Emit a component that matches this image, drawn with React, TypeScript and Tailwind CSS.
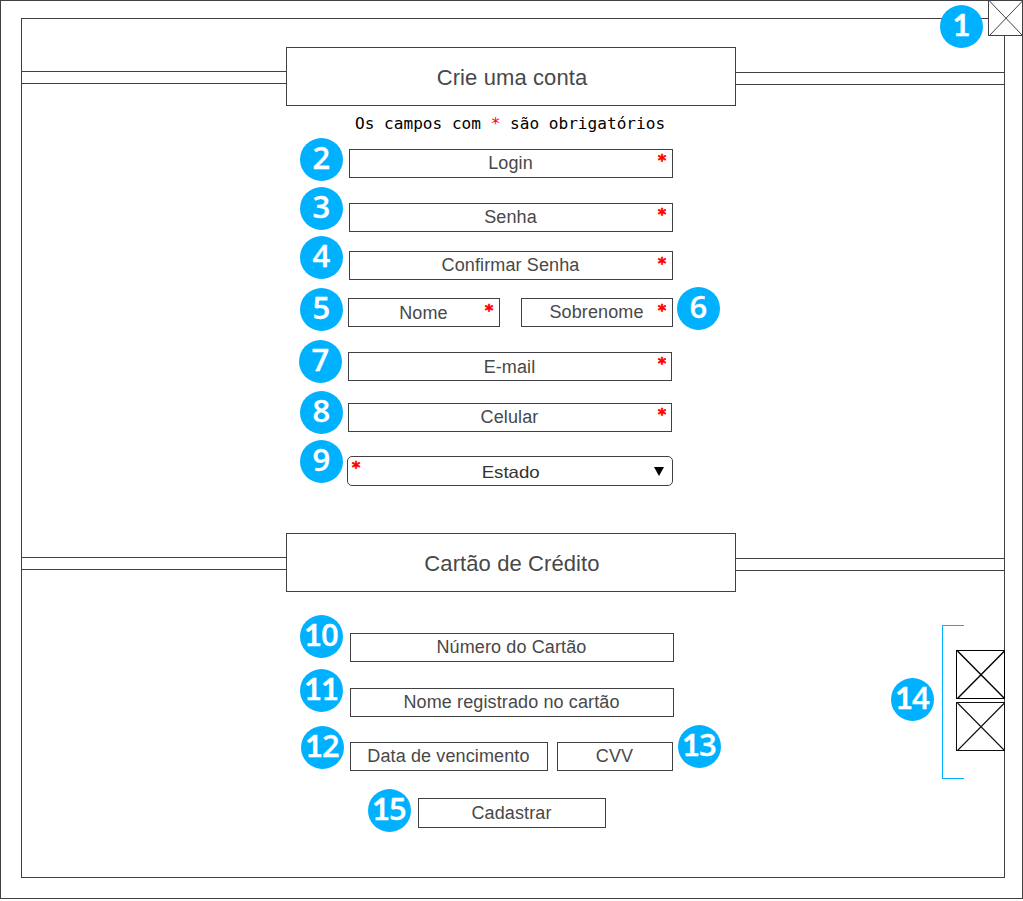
import { clsx } from "clsx";

function Badge({ n, className }: { n: number; className: string }) {
  return (
    <span
      className={clsx(
        "absolute z-10 flex size-[43px] justify-center rounded-full bg-[#00b1ff] pr-[1px] font-['Open_Sans',sans-serif] text-[31px] leading-[38px] font-semibold text-white [-webkit-text-stroke:0.3px_#fff]",
        className,
      )}
    >
      {String(n)
        .split("")
        .map((digit, i) => (
          <span
            key={i}
            className={digit === "1" ? "w-[17px] text-center font-['Lato',sans-serif] text-[31px] font-bold" : "w-[17px] text-center"}
          >
            {digit}
          </span>
        ))}
    </span>
  );
}

function Required({ className }: { className: string }) {
  return (
    <span
      className={clsx(
        "absolute flex h-5 w-3 justify-center font-['DejaVu_Sans_Mono',monospace] text-[16px] leading-5 font-bold text-[#ff0000] [-webkit-text-stroke:0.6px_#ff0000]",
        className,
      )}
    >
      *
    </span>
  );
}

type FieldProps = {
  label: string;
  n: number;
  box: string;
  badge: string;
  star?: string;
  text?: string;
};

function Field({ label, n, box, badge, star, text = "pt-[3px]" }: FieldProps) {
  return (
    <div className={clsx("relative shrink-0", box)}>
      <div
        className={clsx(
          "h-full w-full border border-[#414042] pr-[1px] text-center text-[18px] leading-[20px] tracking-[0.12px] whitespace-nowrap text-[#484848]",
          text,
        )}
      >
        {label}
      </div>
      {star && <Required className={star} />}
      <Badge n={n} className={badge} />
    </div>
  );
}

function SectionTitle({ children, className }: { children: string; className: string }) {
  return (
    <div className={clsx("flex h-[59px] shrink-0", className)}>
      <div className="mt-[24px] h-[13px] w-[264px] border-y border-[#414042]" />
      <h2 className="w-[450px] border border-[#414042] pt-[17px] pl-[2px] text-center text-[22px] leading-[26px] tracking-[0.1px] text-[#484848]">
        {children}
      </h2>
      <div className="mt-[25px] h-[13px] w-[268px] border-y border-[#414042]" />
    </div>
  );
}

function Crossed({ w, h, color, weight = 1 }: { w: number; h: number; color: string; weight?: number }) {
  return (
    <svg width={w} height={h} viewBox={`0 0 ${w} ${h}`} className="block" fill="none" stroke={color}>
      <rect x="0.5" y="0.5" width={w - 1} height={h - 1} fill="#fff" />
      <path d={`M1.5 1L${w - 0.5} ${h - 0.5}M${w - 0.5} 1L1.5 ${h - 0.5}`} strokeWidth={weight} />
    </svg>
  );
}

export default function App() {
  return (
    <div className="h-[901px] w-[1023px] overflow-hidden bg-white font-['Liberation_Sans',Arial,sans-serif]">
      <div className="relative h-[899px] border border-[#414042] pt-[17px] pl-[20px]">
        <main className="flex h-[860px] w-[984px] flex-col border border-[#414042]">
          <SectionTitle className="mt-[28px]">Crie uma conta</SectionTitle>
          <p className="ml-[333px] h-[43px] shrink-0 pt-[8px] font-['DejaVu_Sans_Mono',monospace] text-[16.1px] leading-[20px] whitespace-pre text-black">
            Os campos com <span className="text-[#ff0000]">*</span> são obrigatórios
          </p>

          <form className="ml-[325px] flex w-[327px] flex-col">
            <Field label="Login" n={2} box="ml-[2px] h-[29px] w-[324px]" badge="-left-[49px] -top-[11px]" star="left-[307px] top-[2px]" />
            <Field label="Senha" n={3} box="mt-[25px] ml-[2px] h-[29px] w-[324px]" badge="-left-[49px] -top-[16px]" star="left-[307px] top-[2px]" />
            <Field label="Confirmar Senha" n={4} box="mt-[19px] ml-[2px] h-[29px] w-[324px]" badge="-left-[49px] -top-[15px]" star="left-[307px] top-[3px]" />
            <div className="mt-[18px] ml-[1px] flex gap-[21px]">
              <Field label="Nome" n={5} box="h-[29px] w-[152px]" badge="-left-[48px] -top-[10px]" star="left-[135px] top-[3px]" text="pt-[4px]" />
              <Field label="Sobrenome" n={6} box="h-[29px] w-[152px]" badge="left-[156px] -top-[11px]" star="left-[135px] top-[3px]" />
            </div>
            <Field label="E-mail" n={7} box="mt-[25px] ml-[1px] h-[29px] w-[324px]" badge="-left-[49px] -top-[12px]" star="left-[308px] top-[2px]" text="pt-[4px]" />
            <Field label="Celular" n={8} box="mt-[22px] ml-[1px] h-[29px] w-[324px]" badge="-left-[48px] -top-[12px]" star="left-[308px] top-[2px]" />
            <div className="relative mt-[24px] h-[30px] w-[326px] shrink-0">
              <div className="h-full rounded-[5px] border border-[#414042] pt-[5px] pl-[2px] text-center text-[16.5px] leading-[20px] text-[#333333]">
                <span className="inline-block scale-x-[1.13]">Estado</span>
              </div>
              <svg width="10" height="9" viewBox="0 0 10 9" className="absolute top-[11px] left-[307px]">
                <path d="M0 0H10L5 9Z" fill="#000" />
              </svg>
              <Required className="left-[3px] top-[2px]" />
              <Badge n={9} className="-left-[47px] -top-[16px]" />
            </div>
          </form>

          <SectionTitle className="mt-[47px]">Cartão de Crédito</SectionTitle>

          <form className="ml-[328px] flex w-[324px] flex-col pt-[41px]">
            <Field label="Número do Cartão" n={10} box="h-[29px] w-[324px]" badge="-left-[50px] -top-[18px]" />
            <Field label="Nome registrado no cartão" n={11} box="mt-[26px] h-[29px] w-[324px]" badge="-left-[50px] -top-[19px]" />
            <div className="mt-[25px] flex gap-[9px]">
              <Field label="Data de vencimento" n={12} box="h-[29px] w-[198px]" badge="-left-[49px] -top-[16px]" />
              <Field label="CVV" n={13} box="h-[29px] w-[116px]" badge="left-[121px] -top-[17px]" />
            </div>
            <Field label="Cadastrar" n={15} box="mt-[27px] ml-[68px] h-[30px] w-[188px]" badge="-left-[50px] -top-[9px]" text="pt-[4px]" />
          </form>
        </main>

        <div className="absolute -top-px -right-px">
          <Crossed w={35} h={36} color="#414042" />
          <Badge n={1} className="-left-[48px] top-[5px]" />
        </div>

        <aside className="absolute top-[624px] left-[941px] flex h-[154px] w-[63px]">
          <div className="h-full w-[22px] border-y border-l border-[#00b1ff]" />
          <div className="-ml-[8px] flex flex-col gap-[3px] pt-[25px]">
            <Crossed w={49} h={49} color="#000" weight={1.4} />
            <Crossed w={49} h={49} color="#111" weight={1.1} />
          </div>
          <Badge n={14} className="-left-[51px] top-[53px]" />
        </aside>
      </div>
    </div>
  );
}
